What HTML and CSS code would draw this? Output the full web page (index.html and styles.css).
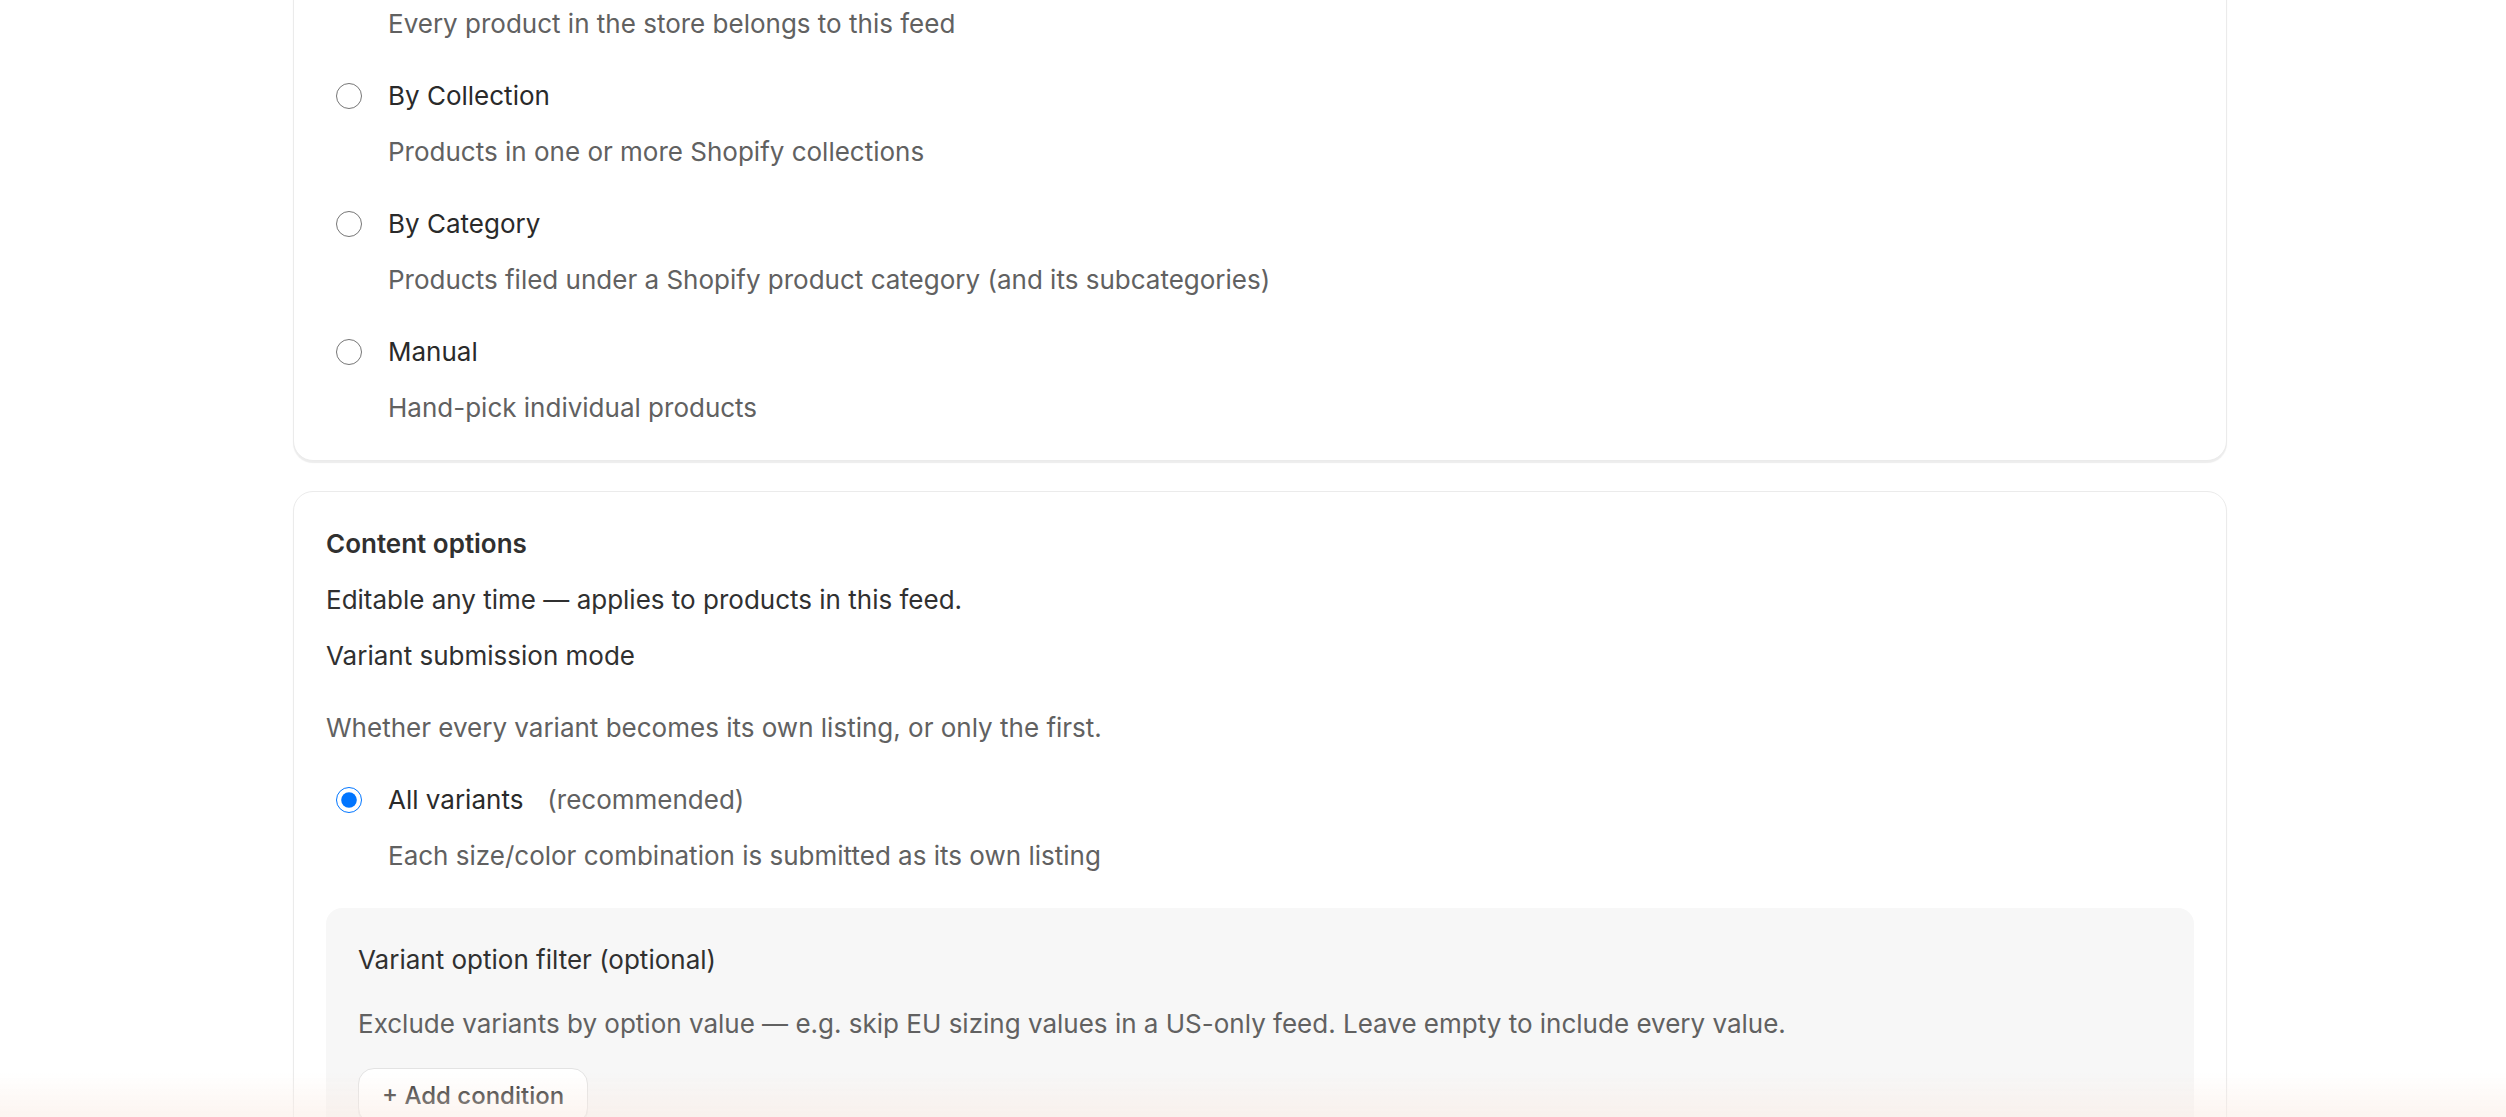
FILE: index.html
```html
<!DOCTYPE html>
<html lang="en">
<head>
    <meta charset="UTF-8">
    <meta name="viewport" content="width=device-width, initial-scale=1.0">
    <title>Feed settings</title>
    <link rel="stylesheet" href="styles.css">
</head>
<body>
    <div class="page">
        <div class="card card-scope">
            <div class="choice-list">
                <label class="choice">
                    <span class="choice-row">
                        <input type="radio" name="scope" checked>
                        <span class="choice-label">All products</span>
                    </span>
                    <span class="help">Every product in the store belongs to this feed</span>
                </label>
                <label class="choice">
                    <span class="choice-row">
                        <input type="radio" name="scope">
                        <span class="choice-label">By Collection</span>
                    </span>
                    <span class="help">Products in one or more Shopify collections</span>
                </label>
                <label class="choice">
                    <span class="choice-row">
                        <input type="radio" name="scope">
                        <span class="choice-label">By Category</span>
                    </span>
                    <span class="help">Products filed under a Shopify product category (and its subcategories)</span>
                </label>
                <label class="choice">
                    <span class="choice-row">
                        <input type="radio" name="scope">
                        <span class="choice-label">Manual</span>
                    </span>
                    <span class="help">Hand-pick individual products</span>
                </label>
            </div>
        </div>

        <div class="card">
            <h2 class="card-title">Content options</h2>
            <p class="text gap-sm">Editable any time — applies to products in this feed.</p>
            <p class="text gap-sm">Variant submission mode</p>
            <p class="help gap-lg">Whether every variant becomes its own listing, or only the first.</p>

            <div class="choice-list gap-lg">
                <label class="choice">
                    <span class="choice-row">
                        <input type="radio" name="variants" checked>
                        <span class="choice-label">All variants</span>
                        <span class="choice-note">(recommended)</span>
                    </span>
                    <span class="help">Each size/color combination is submitted as its own listing</span>
                </label>
            </div>

            <div class="subpanel gap-lg">
                <p class="text">Variant option filter (optional)</p>
                <p class="help gap-md">Exclude variants by option value — e.g. skip EU sizing values in a US-only feed. Leave empty to include every value.</p>
                <button class="button gap-md">+ Add condition</button>
            </div>
        </div>
    </div>

    <div class="fade"></div>
</body>
</html>
```

FILE: styles.css
```css
body {
    font-family: Inter, "Noto Sans", sans-serif;
    font-size: 26px;
    line-height: 40px;
    color: #303030;
    margin: 0;
    background-color: white;
    overflow: hidden;
}

p, h2 {
    margin: 0;
}

.page {
    width: 1934px;
    margin: -85px 0 0 293px;
    display: flex;
    flex-direction: column;
    gap: 30px;
}

.card {
    background: white;
    border: 1px solid #ebebeb;
    border-radius: 20px;
    padding: 32px;
    box-shadow: 0 2px 1px rgba(26, 26, 26, 0.08);
}

.card-title {
    font-size: 26px;
    font-weight: 600;
    line-height: 40px;
}

.gap-sm { margin-top: 16px; }
.gap-md { margin-top: 24px; }
.gap-lg { margin-top: 32px; }

.text {
    color: #303030;
}

.help {
    color: #616161;
    display: block;
}

/* Radio choices */
.choice-list {
    display: flex;
    flex-direction: column;
    gap: 32px;
}

.choice {
    display: flex;
    flex-direction: column;
    gap: 16px;
    cursor: pointer;
}

.choice .help {
    padding-left: 62px;
}

.choice-row {
    display: flex;
    align-items: center;
    height: 40px;
}

.choice-row input {
    width: 26px;
    height: 26px;
    margin: 0 26px 0 10px;
    accent-color: #0075ff;
}

.choice-label {
    color: #2a2a2a;
}

.choice-note {
    margin-left: 24px;
    color: #616161;
}

/* Nested grey panel */
.subpanel {
    background: #f7f7f7;
    border-radius: 16px;
    padding: 32px;
}

.button {
    display: block;
    font-family: inherit;
    font-size: 24px;
    font-weight: 500;
    line-height: 40px;
    color: #303030;
    background: white;
    border: 1px solid #e3e3e3;
    border-radius: 16px;
    padding: 7px 23px;
    box-shadow: 0 2px 0 rgba(26, 26, 26, 0.06);
    cursor: pointer;
}

.fade {
    position: fixed;
    left: 0;
    right: 0;
    bottom: 0;
    height: 44px;
    background: linear-gradient(to bottom, rgba(250, 236, 228, 0), rgba(250, 236, 228, 0.55));
    pointer-events: none;
}
```
